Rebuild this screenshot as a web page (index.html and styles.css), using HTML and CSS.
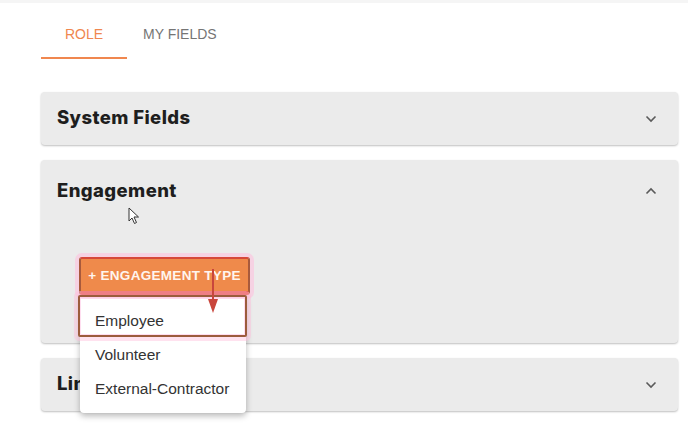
FILE: index.html
```html
<!DOCTYPE html>
<html>
<head>
<meta charset="utf-8">
<link rel="stylesheet" href="styles.css">
</head>
<body>
<div class="topline"></div>
<div class="page">
  <div class="tabs">
    <div class="tab active">ROLE</div>
    <div class="tab">MY FIELDS</div>
  </div>
  <div class="cards">
    <div class="card">
      <div class="card-head">
        <span class="title">System Fields</span>
        <svg class="chev" width="12" height="8" viewBox="0 0 12 8"><path d="M1.5 1.5 L6 6 L10.5 1.5" fill="none" stroke="#5a5a5a" stroke-width="1.6"/></svg>
      </div>
    </div>
    <div class="card open">
      <div class="card-head tall">
        <span class="title">Engagement</span>
        <svg class="chev" width="12" height="8" viewBox="0 0 12 8"><path d="M1.5 6.5 L6 2 L10.5 6.5" fill="none" stroke="#5a5a5a" stroke-width="1.6"/></svg>
      </div>
      <div class="card-body">
        <div class="dd">
          <div class="btn">+ ENGAGEMENT TYPE</div>
          <div class="menu">
            <div class="item">Employee</div>
            <div class="item">Volunteer</div>
            <div class="item">External-Contractor</div>
          </div>
          <div class="hl-item"></div>
          <svg class="arrow" width="16" height="48" viewBox="0 0 16 48"><path d="M8 0 V34" stroke="#c9463c" stroke-width="2"/><path d="M3 30 L13 30 L8 44 Z" fill="#c9463c"/></svg>
        </div>
      </div>
    </div>
    <div class="card">
      <div class="card-head">
        <span class="title short">Lin</span>
        <svg class="chev" width="12" height="8" viewBox="0 0 12 8"><path d="M1.5 1.5 L6 6 L10.5 1.5" fill="none" stroke="#5a5a5a" stroke-width="1.6"/></svg>
      </div>
    </div>
  </div>
</div>
<svg class="cursor" width="12" height="18" viewBox="0 0 12 18"><path d="M1 1 L1 14 L4 11 L6.5 16.5 L8.5 15.5 L6 10 L10.5 10 Z" fill="#fff" stroke="#333" stroke-width="1"/></svg>
</body>
</html>
```
FILE: styles.css
```css
* { box-sizing: border-box; }
html, body { margin: 0; padding: 0; background: #fff; }
body { font-family: "Liberation Sans", Arial, sans-serif; width: 688px; height: 425px; overflow: hidden; position: relative; }
.topline { height: 3px; background: #f5f5f5; }
.page { padding: 0 10px 0 41px; }
.tabs { display: flex; height: 56px; margin-bottom: 33px; }
.tab { font-family: "Liberation Sans", Arial, sans-serif; font-size: 14px; color: #757575; padding: 7px 16px 0; display: flex; align-items: center; justify-content: center; height: 56px; border-bottom: 2px solid transparent; }
.tab.active { color: #f0874f; border-bottom-color: #f0874f; width: 86px; }
.cards { display: flex; flex-direction: column; gap: 15px; }
.card { background: #ebebeb; border-radius: 4px; box-shadow: 0 1px 2px rgba(0,0,0,0.25); }
.card-head { height: 53px; display: flex; align-items: center; justify-content: space-between; padding: 0 21px 0 16px; }
.card-head.tall { height: 62px; padding-top: 0; }
.title { font-family: Inter, "Noto Sans", sans-serif; font-weight: 800; font-size: 18.5px; color: #1e1e1e; letter-spacing: 0.4px; margin-top: -3px; }
.card-body { height: 121px; padding: 35px 38px; }
.dd { position: relative; width: 171px; }
.btn { position: relative; z-index: 3; height: 38px; background: #ef8a4b; color: #fff5ee; font-family: "Liberation Sans", Arial, sans-serif; font-weight: 700; font-size: 13.5px; display: flex; align-items: center; justify-content: center; letter-spacing: 0.3px; border: 2px solid #a85a3c; border-top-color: #d6483a; border-bottom: 4px solid #e24a3c; border-radius: 3px; box-shadow: 0 0 0 4px rgba(255,190,220,0.55); }
.menu { position: absolute; z-index: 2; left: 1px; top: 37px; width: 166px; background: #fff; border-radius: 4px; box-shadow: 0 3px 6px rgba(0,0,0,0.28); padding: 9px 0 8px; }
.item { height: 34px; display: flex; align-items: center; padding: 2px 15px 0; font-size: 15.5px; color: #333; white-space: nowrap; }
.hl-item { position: absolute; z-index: 4; left: -1px; top: 38px; width: 169px; height: 42px; border: 2px solid #9c5c3c; border-radius: 2px; box-shadow: 0 0 0 4px rgba(255,190,220,0.45), inset 0 0 0 1px rgba(255,200,230,0.6); }
.arrow { position: absolute; z-index: 5; left: 126px; top: 12px; }
.cursor { position: absolute; left: 128px; top: 207px; }
```
